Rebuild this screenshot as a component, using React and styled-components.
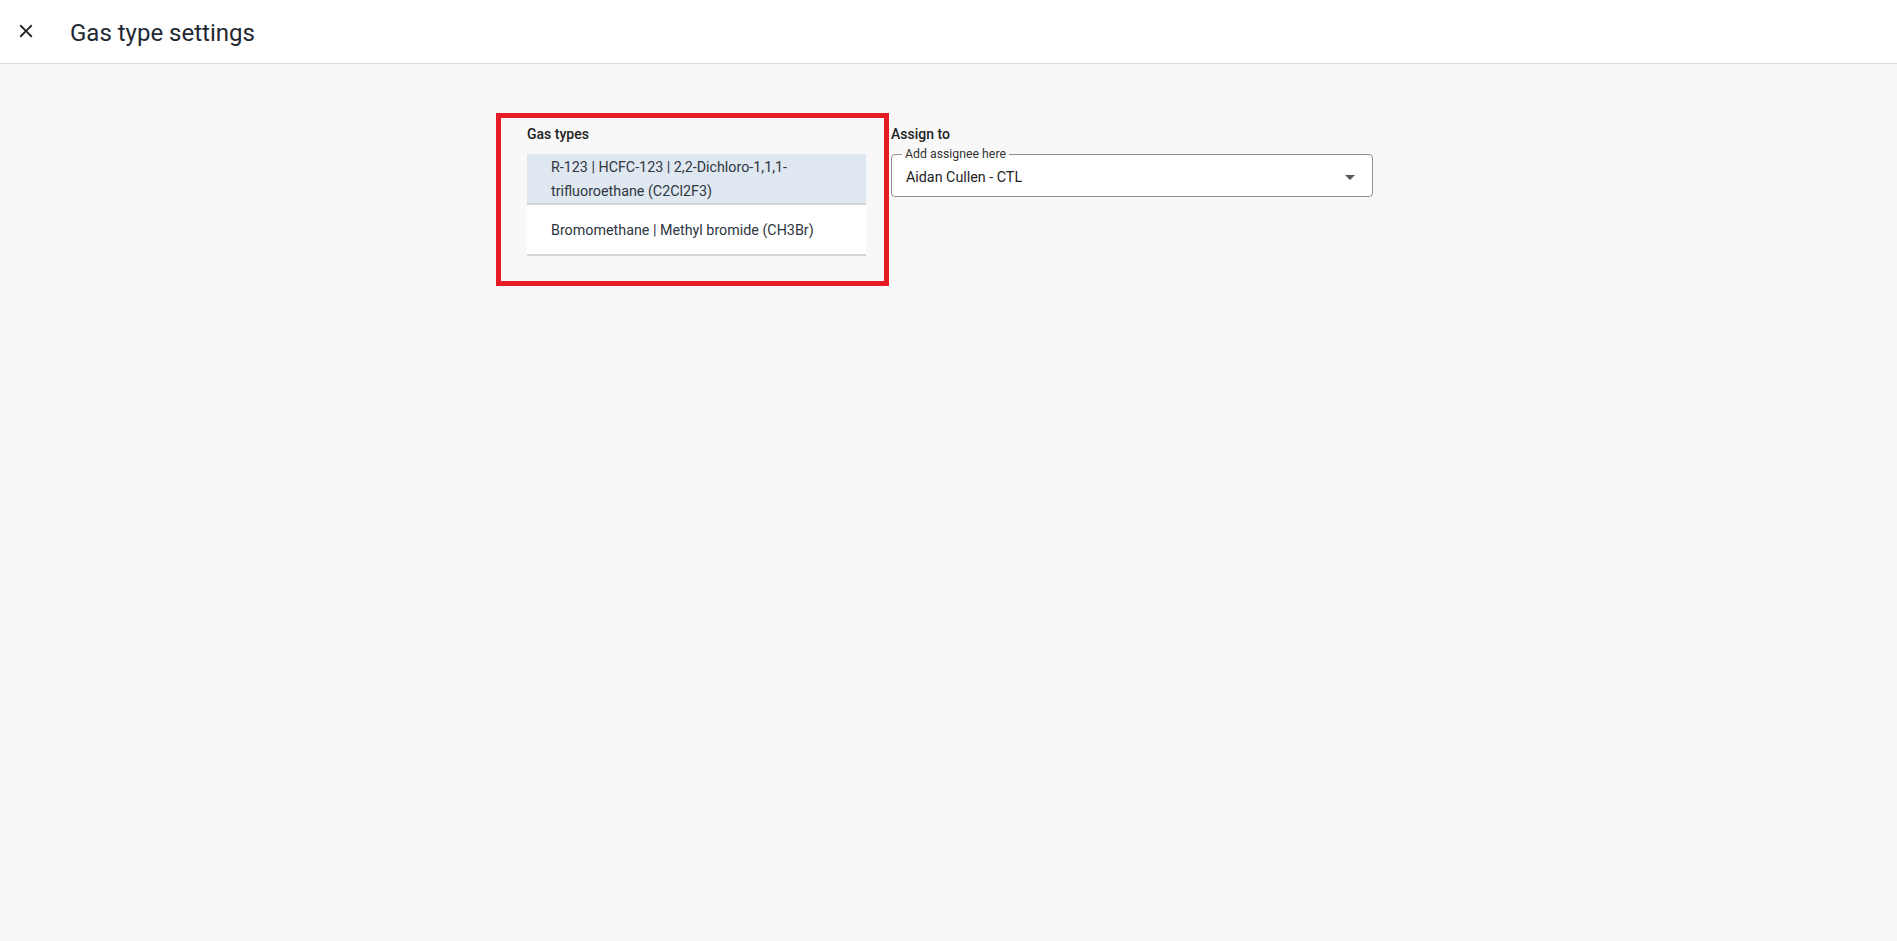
import React, { useState } from "react";
import styled, { createGlobalStyle } from "styled-components";

const GlobalStyle = createGlobalStyle`
  html, body {
    margin: 0;
    padding: 0;
    background: #f8f8f8;
    font-family: Roboto, "Liberation Sans", Arial, sans-serif;
  }
  * { box-sizing: border-box; }
`;

const gasTypes = [
  "R-123 | HCFC-123 | 2,2-Dichloro-1,1,1-trifluoroethane (C2Cl2F3)",
  "Bromomethane | Methyl bromide (CH3Br)",
];

const CloseIcon = () => (
  <svg width="22" height="22" viewBox="0 0 24 24" fill="#222">
    <path d="M19 6.41 17.59 5 12 10.59 6.41 5 5 6.41 10.59 12 5 17.59 6.41 19 12 13.41 17.59 19 19 17.59 13.41 12z" />
  </svg>
);

const ArrowDropDown = () => (
  <svg width="24" height="24" viewBox="0 0 24 24" fill="#575757">
    <path d="M7 10l5 5 5-5z" />
  </svg>
);

const App = () => {
  const [selected, setSelected] = useState(0);

  return (
    <>
      <GlobalStyle />
      <Header>
        <IconButton aria-label="close">
          <CloseIcon />
        </IconButton>
        <Title>Gas type settings</Title>
      </Header>

      <Main>
        <Content>
          <GasColumn>
            <Label>Gas types</Label>
            <List>
              {gasTypes.map((gas, index) => (
                <Row
                  key={index}
                  $active={selected === index}
                  onClick={() => setSelected(index)}
                >
                  {gas}
                </Row>
              ))}
            </List>
          </GasColumn>

          <AssignColumn>
            <Label>Assign to</Label>
            <SelectBox>
              <Legend>Add assignee here</Legend>
              <SelectValue>
                <span>Aidan Cullen - CTL</span>
                <ArrowDropDown />
              </SelectValue>
            </SelectBox>
          </AssignColumn>
        </Content>
      </Main>
    </>
  );
};

const Header = styled.header`
  height: 64px;
  display: flex;
  align-items: center;
  background: #fff;
  border-bottom: 1px solid #dcdcdc;
  padding: 2px 0 0 15px;
`;

const IconButton = styled.button`
  border: none;
  background: none;
  padding: 0;
  margin-bottom: 4px;
  width: 22px;
  height: 22px;
  display: flex;
  cursor: pointer;
`;

const Title = styled.h1`
  margin: 1px 0 0 33px;
  font-size: 24px;
  font-weight: 400;
  color: #1f2933;
  line-height: 30px;
`;

const Main = styled.main`
  padding-top: 54px;
  min-height: calc(100vh - 64px);
`;

const Content = styled.div`
  width: 895px;
  margin: 0 auto;
  padding-right: 23px;
  display: flex;
  gap: 7px;
`;

const GasColumn = styled.section`
  width: 383px;
  padding: 6px 18px 25px 26px;
  outline: 5px solid #e51c23;
`;

const AssignColumn = styled.section`
  width: 482px;
  padding-top: 6px;
`;

const Label = styled.div`
  font-size: 14px;
  font-weight: 500;
  line-height: 20px;
  color: #222;
  margin-bottom: 10px;
`;

const List = styled.div`
  display: flex;
  flex-direction: column;
`;

const Row = styled.div`
  min-height: 51px;
  display: flex;
  align-items: center;
  padding: 1px 24px 0;
  font-size: 14.3px;
  line-height: 24px;
  color: #2e3640;
  background: ${({ $active }) => ($active ? "#dfe7f0" : "#fff")};
  border-bottom: 2px solid #d4d4d4;
  cursor: pointer;
`;

const SelectBox = styled.fieldset`
  margin: -7px 0 0;
  padding: 0 10px 0 14px;
  border: 1px solid #8f8f8f;
  border-radius: 4px;
  background: #fff;
  cursor: pointer;
`;

const Legend = styled.legend`
  margin-left: -4px;
  padding: 0 3px;
  font-size: 12.3px;
  line-height: 14px;
  color: #333;
`;

const SelectValue = styled.div`
  height: 32px;
  margin-bottom: 3px;
  display: flex;
  align-items: center;
  justify-content: space-between;
  font-size: 14.3px;
  color: #222;
`;

export default App;
